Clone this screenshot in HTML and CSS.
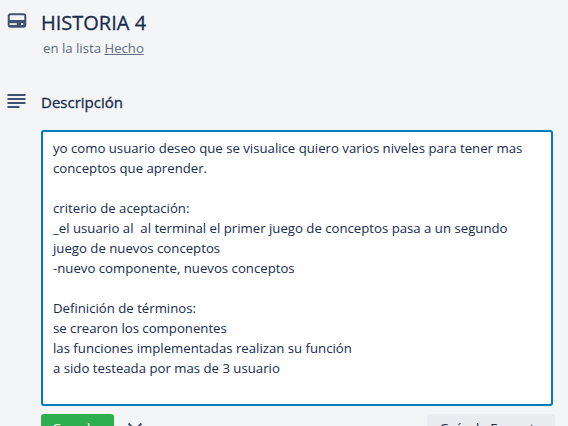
FILE: index.html
```html
<!DOCTYPE html>
<html lang="es">
<head>
<meta charset="utf-8">
<title>HISTORIA 4</title>
<link rel="stylesheet" href="styles.css">
</head>
<body>
<main class="card">
  <header class="row head">
    <svg class="icon" width="20" height="20" viewBox="0 0 20 20"><rect x="1.7" y="3.3" width="16.6" height="12.4" rx="2" fill="none" stroke="#42526e" stroke-width="2"/><rect x="2" y="9" width="16" height="6" fill="#42526e"/><rect x="2.6" y="12.2" width="7.2" height="1.7" fill="#f4f5f7"/><rect x="14" y="12.2" width="2.2" height="1.7" fill="#f4f5f7"/></svg>
    <div class="head-text">
      <h1 class="title">HISTORIA 4</h1>
      <p class="sub">en la lista <a class="link" href="#">Hecho</a></p>
    </div>
  </header>
  <section class="row desc-head">
    <svg class="icon" width="20" height="20" viewBox="0 0 20 20"><path d="M0.5 3h18M0.5 7h18M0.5 11h18M0.5 15h12" stroke="#42526e" stroke-width="1.8" fill="none"/></svg>
    <h2 class="desc-title">Descripción</h2>
  </section>
  <div class="editor">yo como usuario deseo que se visualice quiero varios niveles para tener mas
conceptos que aprender.

criterio de aceptación:
_el usuario al  al terminal el primer juego de conceptos pasa a un segundo
juego de nuevos conceptos
-nuevo componente, nuevos conceptos

Definición de términos:
se crearon los componentes
las funciones implementadas realizan su función
a sido testeada por mas de 3 usuario</div>
  <div class="actions">
    <button class="save">Guardar</button>
    <svg class="close" width="18" height="18" viewBox="0 0 18 18"><path d="M2.5 2.5l13 13M15.5 2.5l-13 13" stroke="#42526e" stroke-width="2" fill="none"/></svg>
    <button class="help">Guía de Formato</button>
  </div>
</main>
</body>
</html>
```
FILE: styles.css
```css
html, body { margin: 0; height: 426px; overflow: hidden; }
body { background: #f4f5f7; color: #172b4d; font-family: "Open Sans", "Noto Sans", sans-serif; }
.card { padding: 11px 13px 0 7px; display: flex; flex-direction: column; }
.row { display: flex; align-items: flex-start; gap: 14px; }
.icon { flex: none; }
.title { margin: 0; font-size: 20px; line-height: 24px; font-weight: 400; -webkit-text-stroke: 0.3px #172b4d; color: #172b4d; }
.sub { margin: 3px 0 0 2px; font-size: 13.2px; line-height: 20px; color: #5e6c84; }
.link { color: #5e6c84; }
.desc-head { margin-top: 34px; align-items: center; }
.desc-title { margin: 0; font-size: 15px; line-height: 20px; font-weight: 400; -webkit-text-stroke: 0.3px #172b4d; color: #172b4d; }
.editor { margin: 18px 0 0 34px; box-sizing: border-box; width: 512px; height: 276px; background: #fff; border: 2px solid #0079bf; border-radius: 3px; padding: 6px 10px; font-size: 13.2px; line-height: 20px; white-space: pre-wrap; color: #172b4d; }
.actions { margin: 8px 0 0 34px; display: flex; align-items: flex-start; }
button { font: inherit; font-size: 13.2px; border: 0; border-radius: 3px; height: 32px; padding: 0 0 4px; }
.save { width: 73px; background: #2eaf4f; color: #fff; }
.close { margin: 7px 0 0 12px; }
.help { margin-left: auto; width: 128px; background: #ebecf0; color: #172b4d; }
```
